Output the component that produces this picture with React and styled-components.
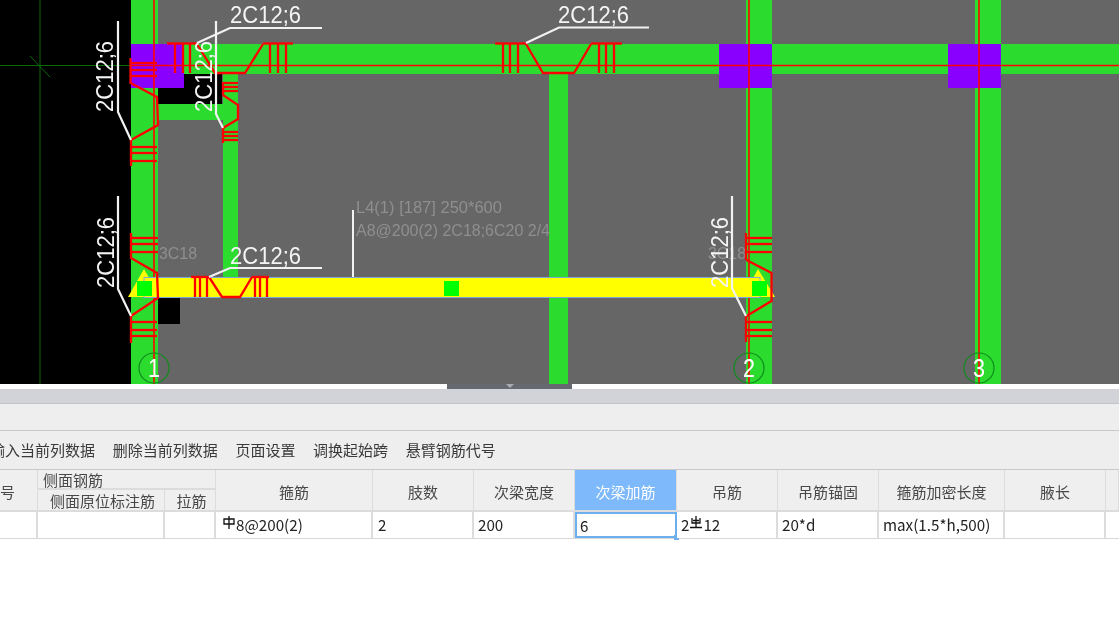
import React from 'react';
import styled, { createGlobalStyle } from 'styled-components';

const GlobalStyle = createGlobalStyle`
  html, body {
    margin: 0;
    padding: 0;
    background: #fff;
    overflow: hidden;
  }
`;

const uiFont = '"Noto Sans CJK SC", "Noto Sans", sans-serif';

const Page = styled.div`
  width: 1119px;
  height: 624px;
  overflow: hidden;
  display: flex;
  flex-direction: column;
  background: #fff;
  font-family: ${uiFont};
  filter: blur(0.35px);
`;

const Viewport = styled.svg`
  display: block;
  flex: none;
  width: 1119px;
  height: 384px;
`;

const Splitter = styled.div`
  flex: none;
  height: 5px;
  background: #fff;
  display: flex;
  padding-left: 447px;
`;

const SplitterHandle = styled.div`
  width: 125px;
  height: 5px;
  background: #66696f;
  display: flex;
  justify-content: center;

  &::after {
    content: '';
    width: 0;
    height: 0;
    border-left: 4px solid transparent;
    border-right: 4px solid transparent;
    border-top: 4px solid #a9abb0;
  }
`;

const TitleStrip = styled.div`
  flex: none;
  height: 14px;
  background: #d2d3d8;
  border-bottom: 1px solid #c4c5ca;
`;

const EmptyBar = styled.div`
  flex: none;
  height: 26px;
  background: #eeeeee;
  border-bottom: 1px solid #c8c9ce;
`;

const Toolbar = styled.div`
  flex: none;
  height: 38px;
  box-sizing: border-box;
  background: #eeeeee;
  display: flex;
  align-items: center;
  gap: 17.7px;
  margin-left: -10px;
  padding-bottom: 1px;
  white-space: nowrap;
`;

const ToolButton = styled.span`
  font-size: 15px;
  color: #3a3a3a;
`;

const Table = styled.div`
  flex: none;
  display: grid;
  grid-template-columns: 38px 127px 51px 157px 101px 101px 102px 101px 101px 126px 101px 13px;
  grid-template-rows: 20px 22px 26px;
  background: #eeeeee;
  border-top: 1px solid #c8c9ce;
  border-bottom: 1px solid #d8d8da;
`;

const HeadCell = styled.div`
  grid-row: ${p => p.$row || '1 / span 2'};
  box-sizing: border-box;
  display: flex;
  align-items: center;
  justify-content: ${p => (p.$left ? 'flex-start' : 'center')};
  padding-left: ${p => (p.$inset ? `${p.$inset}px` : '0')};
  padding-top: ${p => (p.$row ? '0' : '2px')};
  overflow: hidden;
  font-size: 15px;
  white-space: nowrap;
  background: ${p => (p.$active ? '#7db9fb' : '#efefef')};
  color: ${p => (p.$active ? '#fff' : '#484848')};
  border-right: 1px solid #dcdcde;
  border-bottom: 2px solid #dcdcde;
`;

const GroupHead = styled(HeadCell)`
  grid-column: 2 / span 2;
  grid-row: 1;
  padding-top: 0;
`;

const DataCell = styled.div`
  position: relative;
  box-sizing: border-box;
  display: flex;
  align-items: center;
  padding-left: ${p => (p.$pad ? `${p.$pad}px` : '5px')};
  padding-bottom: 2px;
  background: #fff;
  font-size: 15.2px;
  color: #222;
  white-space: nowrap;
  border-right: 2px solid #dcdcde;
  ${p => p.$active && `
    border: 2px solid #6daeee;
    padding-left: 3px;
    padding-bottom: 0;
  `}
`;

const EdgeCell = styled(DataCell)`
  border-right: none;
`;

const FillHandle = styled.span`
  position: absolute;
  right: -4px;
  bottom: -4px;
  width: 5px;
  height: 5px;
  background: #6daeee;
`;

const RebarGlyph = styled.svg`
  flex: none;
  width: 12px;
  height: 13px;
  margin: -4px 1px 0 ${p => (p.$gap ? `${p.$gap}px` : '0')};
`;

const Rest = styled.div`
  flex: 1;
  background: #fff;
`;

const RED = '#ff0000';
const GREEN = '#2bdc2f';
const PURPLE = '#8a00ff';
const MARK_FONT = "'Liberation Sans', sans-serif";

// stirrup group hanging off a column: spine + ticks
const ColumnTicks = ({ x, y1, y2, ticks, x2 }) => (
  <g stroke={RED} strokeWidth="2.3" fill="none">
    <line x1={x} y1={y1} x2={x} y2={y2} />
    {ticks.map(t => <line key={t} x1={x} y1={t} x2={x2} y2={t} />)}
  </g>
);

// stirrup group sitting on a beam: top bar + ticks
const BeamTicks = ({ y, y2, x1, x2, ticks }) => (
  <g stroke={RED} strokeWidth="2.3" fill="none">
    <line x1={x1} y1={y} x2={x2} y2={y} />
    {ticks.map(t => <line key={t} x1={t} y1={y} x2={t} y2={y2} />)}
  </g>
);

const Bent = ({ points }) => (
  <polyline points={points} stroke={RED} strokeWidth="2.3" fill="none" />
);

const Leader = ({ points }) => (
  <polyline points={points} stroke="#f2f2f2" strokeWidth="2.2" fill="none" />
);

const Mark = ({ x, y, rotate }) => (
  <text
    x={x}
    y={y}
    fill="#f4f4f4"
    fontFamily={MARK_FONT}
    fontSize="24"
    textLength="71"
    lengthAdjust="spacingAndGlyphs"
    transform={rotate ? `rotate(-90 ${x} ${y})` : undefined}
  >
    2C12;6
  </text>
);

const Axis = ({ cx, n }) => (
  <g>
    <circle cx={cx} cy="368" r="15" fill="none" stroke="#0f8a1c" strokeWidth="1.2" />
    <text x={cx - 6} y="377" fill="#fff" fontFamily={MARK_FONT} fontSize="25" textLength="12" lengthAdjust="spacingAndGlyphs">{n}</text>
  </g>
);

const Note = ({ x, y, width, children }) => (
  <text x={x} y={y} fill="#8f8f8f" fontFamily={MARK_FONT} fontSize="16.5" textLength={width} lengthAdjust="spacingAndGlyphs">{children}</text>
);

const Drawing = () => (
  <Viewport viewBox="0 0 1119 384">
    <rect width="1119" height="384" fill="#666666" />
    <rect width="131" height="384" fill="#000" />

    <line x1="40" y1="0" x2="40" y2="384" stroke="#0a6b0a" />
    <line x1="0" y1="65.5" x2="131" y2="65.5" stroke="#0a6b0a" />
    <line x1="30" y1="56" x2="50" y2="77" stroke="#0a6b0a" />

    <rect x="158" y="74" width="64" height="30" fill="#000" />
    <rect x="158" y="298" width="22" height="26" fill="#000" />

    <rect x="131" y="0" width="27" height="384" fill={GREEN} />
    <rect x="746" y="0" width="26" height="384" fill={GREEN} />
    <rect x="975" y="0" width="26" height="384" fill={GREEN} />
    <rect x="549" y="74" width="19" height="310" fill={GREEN} />
    <rect x="223" y="74" width="15" height="204" fill={GREEN} />
    <rect x="158" y="104" width="65" height="16" fill={GREEN} />
    <rect x="158" y="44" width="961" height="30" fill={GREEN} />

    <rect x="131" y="44" width="53" height="44" fill={PURPLE} />
    <rect x="719" y="44" width="53" height="44" fill={PURPLE} />
    <rect x="948" y="44" width="53" height="44" fill={PURPLE} />

    <line x1="154" y1="0" x2="154" y2="384" stroke={RED} strokeWidth="1.6" />
    <line x1="749" y1="0" x2="749" y2="384" stroke={RED} strokeWidth="1.6" />
    <line x1="979" y1="0" x2="979" y2="384" stroke={RED} strokeWidth="1.6" />
    <line x1="131" y1="65.5" x2="1119" y2="65.5" stroke={RED} strokeWidth="1.6" />

    <Note x={159} y={259} width={38}>3C18</Note>
    <Note x={708} y={259} width={38}>3C18</Note>
    <Note x={356} y={213} width={146}>L4(1) [187] 250*600</Note>
    <Note x={356} y={236} width={194}>A8@200(2) 2C18;6C20 2/4</Note>
    <line x1="353" y1="210" x2="353" y2="277" stroke="#f2f2f2" strokeWidth="2" />

    <polygon points="128,297 144,269 160,297" fill="#ffff00" />
    <polygon points="743,297 758,269 775,297" fill="#ffff00" />
    <rect x="144" y="277.5" width="616" height="20" fill="#ffff00" stroke="#7fa8d8" />
    <rect x="137" y="281" width="15" height="15" fill="#00ff00" />
    <rect x="444" y="281" width="15" height="15" fill="#00ff00" />
    <rect x="752" y="281" width="15" height="15" fill="#00ff00" />

    {/* top beam stirrups */}
    <BeamTicks y={43.5} y2={73} x1={167} x2={197} ticks={[175, 183, 190]} />
    <Bent points="197,44 215,73 245,73 263,44" />
    <BeamTicks y={43.5} y2={73} x1={263} x2={293} ticks={[270, 278, 286]} />
    <BeamTicks y={43.5} y2={73} x1={495} x2={526} ticks={[503, 510, 518]} />
    <Bent points="526,44 543,73 574,73 591,44" />
    <BeamTicks y={43.5} y2={73} x1={591} x2={622} ticks={[599, 606, 614]} />

    {/* column 1, upper */}
    <ColumnTicks x={130.5} y1={58} y2={84} x2={157} ticks={[63, 70, 76]} />
    <Bent points="130.5,83 157,97 158,125 131,140" />
    <ColumnTicks x={131} y1={140} y2={166} x2={157} ticks={[147, 153, 161]} />

    {/* short secondary beam */}
    <ColumnTicks x={223} y1={82} y2={95} x2={238} ticks={[83, 87, 91]} />
    <Bent points="223,95 238,105 238,119 223,128" />
    <ColumnTicks x={223} y1={128} y2={143} x2={238} ticks={[132, 136, 140]} />

    {/* column 1, lower */}
    <ColumnTicks x={131} y1={233} y2={259} x2={158} ticks={[238, 244, 252]} />
    <Bent points="131,258 157,273 158,298 131,316" />
    <ColumnTicks x={131} y1={316} y2={343} x2={157} ticks={[322, 330, 336]} />

    {/* selected beam */}
    <BeamTicks y={277} y2={297} x1={191} x2={209} ticks={[195, 200, 207]} />
    <Bent points="209,277 222,297 240,297 252,277" />
    <BeamTicks y={277} y2={297} x1={252} x2={269} ticks={[255, 260, 267]} />

    {/* column 2 */}
    <ColumnTicks x={746} y1={233} y2={260} x2={772} ticks={[238, 244, 252]} />
    <Bent points="746.5,260 771.5,273 771.5,301 746.5,316" />
    <ColumnTicks x={746} y1={316} y2={342} x2={772} ticks={[322, 330, 336]} />

    {/* leaders and marks */}
    <Leader points="118,21 118,112 131,140" />
    <Mark x={113} y={112} rotate />
    <Leader points="216,21 216,114 223,128" />
    <Mark x={212} y={112} rotate />
    <Leader points="197,43 230,28 322,28" />
    <Mark x={230} y={23} />
    <Leader points="526,43 559,27.5 649,27.5" />
    <Mark x={558} y={23} />
    <Leader points="209,277 230,268 322,268" />
    <Mark x={230} y={264} />
    <Leader points="118,196 118,289 131,316" />
    <Mark x={114} y={288} rotate />
    <Leader points="732,196 732,288 746,316" />
    <Mark x={728} y={288} rotate />

    <Axis cx={154} n="1" />
    <Axis cx={749} n="2" />
    <Axis cx={979} n="3" />
  </Viewport>
);

// grade A rebar symbol, a barred box on a stem
const GradeA = () => (
  <RebarGlyph viewBox="0 0 12 13">
    <path d="M1 3h10v5H1zM6 0v13" fill="none" stroke="#111" strokeWidth="1.3" />
  </RebarGlyph>
);

// grade C rebar symbol
const GradeC = () => (
  <RebarGlyph viewBox="0 0 12 13" $gap={1}>
    <path d="M2 2v5h8V2M6 0v11M0 11.5h12M3 4.5h6" fill="none" stroke="#111" strokeWidth="1.3" />
  </RebarGlyph>
);

const columns = ['箍筋', '肢数', '次梁宽度', '次梁加筋', '吊筋', '吊筋锚固', '箍筋加密长度', '腋长'];
const tools = ['输入当前列数据', '删除当前列数据', '页面设置', '调换起始跨', '悬臂钢筋代号'];

const App = () => (
  <>
    <GlobalStyle />
    <Page>
      <Drawing />
      <Splitter><SplitterHandle /></Splitter>
      <TitleStrip />
      <EmptyBar />
      <Toolbar>
        {tools.map(t => <ToolButton key={t}>{t}</ToolButton>)}
      </Toolbar>
      <Table>
        <HeadCell $left>号</HeadCell>
        <GroupHead $left $inset={5}>侧面钢筋</GroupHead>
        {columns.map(c => <HeadCell key={c} $active={c === '次梁加筋'}>{c}</HeadCell>)}
        <HeadCell />
        <HeadCell $row="2" $inset={3}>侧面原位标注筋</HeadCell>
        <HeadCell $row="2" $inset={3}>拉筋</HeadCell>

        <DataCell />
        <DataCell />
        <DataCell />
        <DataCell $pad={7}><GradeA />8@200(2)</DataCell>
        <DataCell>2</DataCell>
        <DataCell $pad={4}>200</DataCell>
        <DataCell $active>6<FillHandle /></DataCell>
        <DataCell $pad={4}>2<GradeC />12</DataCell>
        <DataCell $pad={4}>20*d</DataCell>
        <DataCell $pad={4}>max(1.5*h,500)</DataCell>
        <DataCell />
        <EdgeCell />
      </Table>
      <Rest />
    </Page>
  </>
);

export default App;
